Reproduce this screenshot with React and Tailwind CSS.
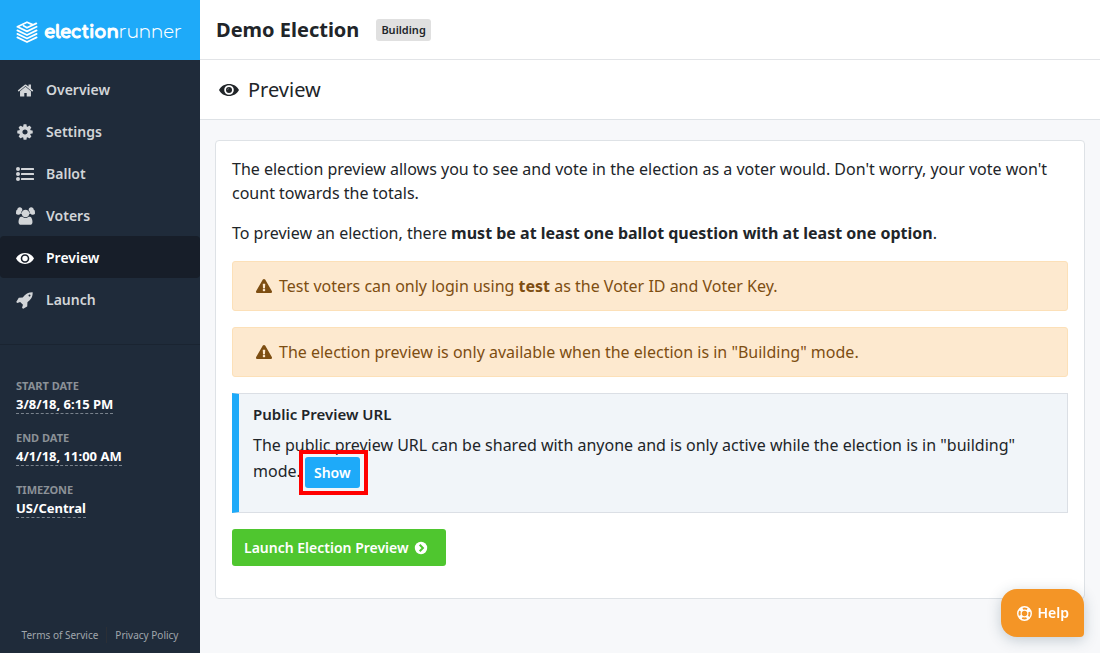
import React from "react";
import { FaExclamationTriangle } from "react-icons/fa";

function Glyph({ d, box = "0 0 1792 1792", className }) {
  return (
    <svg viewBox={box} className={className} fill="currentColor" aria-hidden="true">
      <path d={d} />
    </svg>
  );
}

const HOME =
  "M1472 992v480q0 26-19 45t-45 19h-384v-384h-256v384h-384q-26 0-45-19t-19-45v-480q0-1 .5-3t.5-3l575-474 575 474q1 2 1 6zm223-69l-62 74q-8 9-21 11h-3q-13 0-21-7l-692-577-692 577q-12 8-24 7-13-2-21-11l-62-74q-8-10-7-23.5t11-21.5l719-599q32-26 76-26t76 26l244 204v-195q0-14 9-23t23-9h192q14 0 23 9t9 23v408l219 182q10 8 11 21.5t-7 23.5z";
const COG =
  "M1152 896q0-106-75-181t-181-75-181 75-75 181 75 181 181 75 181-75 75-181zm512-109v222q0 12-8 23t-20 13l-185 28q-19 54-39 91 35 50 107 138 10 12 10 25t-9 23q-27 37-99 108t-94 71q-12 0-26-9l-138-108q-44 23-91 38-16 136-29 186-7 28-36 28h-222q-14 0-24.5-8.5t-11.5-21.5l-28-184q-49-16-90-37l-141 107q-10 9-25 9-14 0-25-11-126-114-165-168-7-10-7-23 0-12 8-23 15-21 51-66.5t54-70.5q-27-50-41-99l-183-27q-13-2-21-12.5t-8-23.5v-222q0-12 8-23t19-13l186-28q14-46 39-92-40-57-107-138-10-12-10-24 0-10 9-23 26-36 98.5-107.5t94.5-71.5q13 0 26 10l138 107q44-23 91-38 16-136 29-186 7-28 36-28h222q14 0 24.5 8.5t11.5 21.5l28 184q49 16 90 37l142-107q9-9 24-9 13 0 25 10 129 119 165 170 7 8 7 22 0 12-8 23-15 21-51 66.5t-54 70.5q26 50 41 98l183 28q13 2 21 12.5t8 23.5z";
const USERS =
  "M593 640q-162 5-265 128h-134q-82 0-138-40.5t-56-118.5q0-353 124-353 6 0 43.5 21t97.5 42.5 119 21.5q67 0 133-23-5 37-5 66 0 139 81 256zM1664 1533q0 120-73 189.5t-194 69.5h-874q-121 0-194-69.5t-73-189.5q0-53 3.5-103.5t14-109 26.5-108.5 43-97.5 62-81 85.5-53.5 111.5-20q10 0 43 21.5t73 48 107 48 135 21.5 135-21.5 107-48 73-48 43-21.5q61 0 111.5 20t85.5 53.5 62 81 43 97.5 26.5 108.5 14 109 3.5 103.5zM640 256q0 106-75 181t-181 75-181-75-75-181 75-181 181-75 181 75 75 181zM1344 640q0 159-112.5 271.5t-271.5 112.5-271.5-112.5-112.5-271.5 112.5-271.5 271.5-112.5 271.5 112.5 112.5 271.5zM1920 609q0 78-56 118.5t-138 40.5h-134q-103-123-265-128 81-117 81-256 0-29-5-66 66 23 133 23 59 0 119-21.5t97.5-42.5 43.5-21q124 0 124 353zM1792 256q0 106-75 181t-181 75-181-75-75-181 75-181 181-75 181 75 75 181z";
const ROCKET =
  "M1440 448q0-40-28-68t-68-28-68 28-28 68 28 68 68 28 68-28 28-68zm224-288q0 249-75.5 430.5t-253.5 360.5q-81 80-195 176l-20 379q-2 16-16 26l-384 224q-7 4-16 4-12 0-23-9l-64-64q-13-14-8-32l85-276-281-281-276 85q-3 1-9 1-14 0-23-9l-64-64q-17-19-5-39l224-384q10-14 26-16l379-20q96-114 176-195 188-187 358-258t431-71q14 0 24 9.5t10 22.5z";

function EyeIcon({ className }) {
  return (
    <svg viewBox="0 0 20 12" className={className} fill="currentColor" aria-hidden="true">
      <path
        fillRule="evenodd"
        d="M10 0C5.600 0 1.900 2.300 0 6c1.900 3.700 5.600 6 10 6s8.100-2.300 10-6c-1.900-3.700-5.600-6-10-6zM10 1.200a4.800 4.800 0 1 1 0 9.600a4.800 4.800 0 1 1 0-9.600z"
      />
      <circle cx="10" cy="6" r="3" />
      <path d="M8.500 6A1.500 1.500 0 0 1 10 4.500" fill="none" stroke="#fff" strokeOpacity="0.35" strokeWidth="0.8" />
    </svg>
  );
}

function ListIcon() {
  return (
    <svg viewBox="0 0 18 14" className="h-[14px] w-[18px]" fill="currentColor" aria-hidden="true">
      <circle cx="2" cy="2" r="2" />
      <circle cx="2" cy="7" r="2" />
      <circle cx="2" cy="12" r="2" />
      <rect x="5" y="1" width="13" height="2" rx="0.5" />
      <rect x="5" y="6" width="13" height="2" rx="0.5" />
      <rect x="5" y="11" width="13" height="2" rx="0.5" />
    </svg>
  );
}

function LifeRing() {
  return (
    <svg viewBox="0 0 16 16" className="size-[15px] shrink-0" fill="none" stroke="currentColor" aria-hidden="true">
      <circle cx="8" cy="8" r="5.2" strokeWidth="3.6" strokeDasharray="3.8 4.368" strokeDashoffset="1.9" transform="rotate(45 8 8)" />
      <circle cx="8" cy="8" r="7.2" strokeWidth="1.5" />
      <circle cx="8" cy="8" r="3.6" strokeWidth="1.3" />
    </svg>
  );
}

function ChevronCircle() {
  return (
    <svg viewBox="0 0 14 14" className="size-[14px]" fill="none" aria-hidden="true">
      <circle cx="7" cy="7" r="6.2" fill="currentColor" />
      <path d="M5.7 3.8 8.9 7l-3.2 3.2" stroke="#4fc62f" strokeWidth="2" />
    </svg>
  );
}

function LogoMark() {
  return (
    <svg viewBox="0 0 22 22" className="size-[22px] shrink-0" fill="none" stroke="currentColor" strokeWidth="1.8" strokeLinejoin="round" strokeLinecap="round" aria-hidden="true">
      <path d="M16.500 3.600 11 1.200 1.400 5.800 11 10.400 20.600 5.800" />
      <path d="M7.500 4.800 11 6.800 20.300 2.400" />
      <path d="M1.400 9.400 11 14 20.600 9.400" />
      <path d="M1.400 12.900 11 17.500 20.600 12.900" />
      <path d="M1.400 16.400 11 21 20.600 16.400" />
    </svg>
  );
}

const NAV = [
  { label: "Overview", icon: <Glyph d={HOME} className="size-[17px]" /> },
  { label: "Settings", icon: <Glyph d={COG} className="size-[18px]" /> },
  { label: "Ballot", icon: <ListIcon /> },
  { label: "Voters", icon: <Glyph d={USERS} box="0 0 1920 1792" className="h-[18px] w-[19px]" /> },
  { label: "Preview", icon: <EyeIcon className="h-[11px] w-[18px]" />, active: true },
  { label: "Launch", icon: <Glyph d={ROCKET} className="size-[18px]" /> },
];

const DETAILS = [
  ["START DATE", "3/8/18, 6:15 PM"],
  ["END DATE", "4/1/18, 11:00 AM"],
  ["TIMEZONE", "US/Central"],
];

function Sidebar() {
  return (
    <aside className="flex w-[200px] shrink-0 flex-col bg-[#1f2b3a]">
      <a href="#home" className="flex h-15 items-center gap-1.5 bg-[#1eaaf9] px-4 pt-1 font-['Comfortaa',Lato,sans-serif] text-lg leading-none text-white">
        <LogoMark />
        <span><span className="font-bold [-webkit-text-stroke:1px_white]">election</span><span className="font-light">runner</span></span>
      </a>
      <nav className="border-b border-[#1a2431] pt-2 pb-6">
        {NAV.map(({ label, icon, active }) => (
          <a
            key={label}
            href={"#" + label.toLowerCase()}
            className={
              active
                ? "flex h-[42px] items-center gap-[11px] rounded-sm bg-[#171e29] px-[15px] pt-0.5 text-sm font-semibold text-white"
                : "flex h-[42px] items-center gap-[11px] px-[15px] pt-0.5 text-sm font-semibold text-[#d2d5d8]"
            }
          >
            <span className="flex w-5 justify-center">{icon}</span>
            {label}
          </a>
        ))}
      </nav>
      <dl className="flex flex-col gap-[15px] px-4 pt-8">
        {DETAILS.map(([term, value]) => (
          <div key={term}>
            <dt className="text-[11px] leading-[18px] font-bold text-[#8b9197]">{term}</dt>
            <dd className="flex">
              <a href="#edit" className="border-b border-dashed border-[#79828c] text-[13px] leading-[18px] font-bold text-white">{value}</a>
            </dd>
          </div>
        ))}
      </dl>
      <footer className="mt-auto flex justify-center pb-2.5 text-[10px] leading-4 text-[#a0a6ac]">
        <a href="#terms" className="border-r border-[#2b2f36] px-2">Terms of Service</a>
        <a href="#privacy" className="px-2">Privacy Policy</a>
      </footer>
    </aside>
  );
}

function Warning({ children }) {
  return (
    <div role="alert" className="mb-4 flex items-center gap-[7px] rounded-[3px] border border-[#fce0b8] bg-[#fde9cf] px-[23px] py-3 text-[#7d4e12]">
      <FaExclamationTriangle className="size-4 shrink-0" />
      <p>{children}</p>
    </div>
  );
}

export default function App() {
  return (
    <div className="flex min-h-screen bg-[#f7f8fa] font-['Noto_Sans',sans-serif] text-base leading-6 text-[#212529]">
      <Sidebar />
      <div className="min-w-0 flex-1">
        <header className="flex h-15 items-center gap-[17px] border-b border-[#e2e4e7] bg-white px-4">
          <h1 className="text-xl font-bold">Demo Election</h1>
          <span className="rounded-[3px] bg-[#e0e0e0] px-[5px] text-[11px] leading-[22px] font-semibold">Building</span>
        </header>
        <div className="flex h-15 items-center gap-[9px] border-b border-[#dee2e6] bg-white px-[19px]">
          <EyeIcon className="h-3 w-5" />
          <h2 className="text-xl">Preview</h2>
        </div>
        <main className="p-5 px-[15px]">
          <section className="rounded-[4px] border border-[#dee2e6] bg-white px-4 pt-4 pb-8">
            <p className="mb-4">
              The election preview allows you to see and vote in the election as a voter would. Don't worry, your vote won't count towards the totals.
            </p>
            <p className="mb-4">
              To preview an election, there <strong>must be at least one ballot question with at least one option</strong>.
            </p>
            <Warning>
              Test voters can only login using <strong>test</strong> as the Voter ID and Voter Key.
            </Warning>
            <Warning>The election preview is only available when the election is in "Building" mode.</Warning>
            <div className="mb-4 border border-l-[7px] border-[#dbdfe5] border-l-[#1eaaf9] bg-[#f1f5f9] px-3.5 pt-2.5 pb-6">
              <h3 className="mb-[9px] text-[15px] leading-5 font-semibold">Public Preview URL</h3>
              <p>
                The public preview URL can be shared with anyone and is only active while the election is in "building" mode.{" "}
                <span className="relative inline-block align-middle">
                  <button type="button" className="block rounded-[3px] bg-[#1eaaf9] px-[9px] text-sm leading-[31px] font-semibold text-white">Show</button>
                  <span className="pointer-events-none absolute -top-[7px] -right-2 -bottom-[7px] -left-1.5 border-4 border-[#ff0000]" />
                </span>
              </p>
            </div>
            <button type="button" className="flex h-[37px] items-center gap-[5px] rounded-[3px] bg-[#4fc62f] pr-[18px] pl-3 text-sm font-semibold text-white">
              Launch Election Preview
              <ChevronCircle />
            </button>
          </section>
        </main>
      </div>
      <button type="button" className="fixed right-4 bottom-4 flex h-12 items-center gap-1.5 rounded-2xl rounded-br-sm bg-[#f49526] pr-[15px] pl-4 text-sm font-semibold text-white shadow-[0_3px_14px_rgba(40,70,90,0.25)]">
        <LifeRing />
        Help
      </button>
    </div>
  );
}
